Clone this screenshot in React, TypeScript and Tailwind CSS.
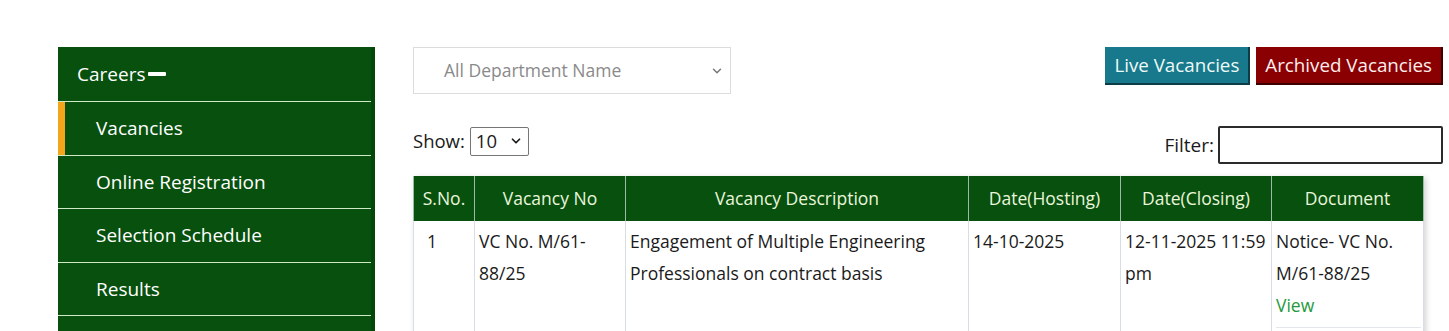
import { ChevronDown } from 'lucide-react';

// sidebar links under Careers
const CAREER_LINKS = ['Vacancies', 'Online Registration', 'Selection Schedule', 'Results', 'Contact'];

const COLUMNS = [
  { label: 'S.No.', w: 'w-[61px]' },
  { label: 'Vacancy No', w: 'w-[151px]' },
  { label: 'Vacancy Description', w: 'w-[343px]' },
  { label: 'Date(Hosting)', w: 'w-[152px]' },
  { label: 'Date(Closing)', w: 'w-[151px]' },
  { label: 'Document', w: 'w-[152px]' },
];

function Sidebar() {
  return (
    <aside className="w-[317px] shrink-0 bg-[#07500d] text-white border-r-[4px] border-[#054709]">
      <div className="h-[54px] flex items-center pl-[19px] text-[19px]">
        Careers
        <span className="ml-[3px] inline-block w-[18px] h-[4px] bg-white rounded-[1px]"></span>
      </div>
      {CAREER_LINKS.map((link, i) => (
        <div key={link} className="relative h-[53.5px] flex items-center pl-[38px] text-[19px] border-t border-[#cfe9c6]">
          {i === 0 && <span className="absolute left-0 top-0 bottom-0 w-[7px] bg-[#f4a51c]"></span>}
          {i < 4 ? link : ''}
        </div>
      ))}
    </aside>
  );
}

function VacancyTable() {
  return (
    <table className="mt-[12px] w-[1010px] table-fixed border-collapse shadow-[2px_2px_6px_rgba(0,0,0,0.18)] text-[17.5px]">
      <thead>
        <tr className="bg-[#07500d] text-[#eaf6dc] h-[45px]">
          {COLUMNS.map(c => (
            <th key={c.label} className={`${c.w} font-normal text-center border-x border-[#9fb8a8] px-1`}>
              {c.label}
            </th>
          ))}
        </tr>
      </thead>
      <tbody className="text-[#1a1a1a] leading-[32px]">
        <tr className="align-top">
          <td className="border-x border-[#d9dee6] pl-[13px] pt-[4px] h-[130px]">1</td>
          <td className="border-x border-[#d9dee6] px-[4px] pt-[4px]">VC No. M/61-88/25</td>
          <td className="border-x border-[#d9dee6] px-[4px] pt-[4px]">
            Engagement of Multiple Engineering Professionals on contract basis
          </td>
          <td className="border-x border-[#d9dee6] px-[4px] pt-[4px]">14-10-2025</td>
          <td className="border-x border-[#d9dee6] px-[4px] pt-[4px]">12-11-2025 11:59 pm</td>
          <td className="border-x border-[#d9dee6] pl-[4px] pr-[2px] pt-[4px]">
            <div className="border-b border-[#e3e6ea] pb-[6px]">
              Notice- VC No. M/61-88/25
              <div className="text-[#1e9a3c]">View</div>
            </div>
          </td>
        </tr>
      </tbody>
    </table>
  );
}

export default function App() {
  return (
    <div className="h-[331px] overflow-hidden bg-white font-['Open_Sans',sans-serif]">
      <div className="flex pt-[47px] pl-[58px] gap-[38px]">
        <Sidebar />

        <main className="w-[1030px]">
          <div className="flex justify-between items-start">
            <div className="w-[318px] h-[47px] border border-[#dcdcdc] flex items-center justify-between pl-[30px] pr-[6px] text-[17.5px] text-[#8a8a8a]">
              <span>All Department Name</span>
              <ChevronDown size={14} strokeWidth={2.5} className="text-[#777]" />
            </div>
            <div className="flex gap-[6px]">
              <button className="h-[38px] px-[9px] bg-[#17798b] text-[#eefaf8] text-[18.75px] border-r-2 border-b-2 border-[#0c3c46]">
                Live Vacancies
              </button>
              <button className="h-[38px] px-[9px] bg-[#8a0002] text-[#fdeeee] text-[18.75px] border-r-2 border-b-2 border-[#3d0000]">
                Archived Vacancies
              </button>
            </div>
          </div>

          <div className="flex justify-between items-center mt-[32px] text-[18.5px] text-[#1a1a1a]">
            <div className="flex items-center gap-[5px] -mt-[8px]">
              <span>Show:</span>
              <div className="w-[59px] h-[29px] border border-[#767676] rounded-[2px] flex items-center justify-between px-[5px]">
                <span>10</span>
                <ChevronDown size={14} strokeWidth={3} />
              </div>
            </div>
            <div className="flex items-center gap-[4px] text-[19px]">
              <span>Filter:</span>
              <div className="w-[225px] h-[38px] border-2 border-[#2b2b2b] rounded-[2px]"></div>
            </div>
          </div>

          <VacancyTable />
        </main>
      </div>
    </div>
  );
}
